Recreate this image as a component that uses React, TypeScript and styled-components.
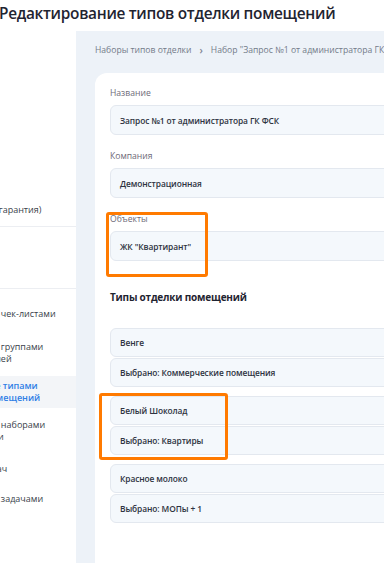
import React from "react";
import styled, { createGlobalStyle } from "styled-components";

const Global = createGlobalStyle`
  html, body { margin: 0; padding: 0; background: #ffffff; }
  body { font-family: "Open Sans", "Noto Sans", sans-serif; }
  * { box-sizing: border-box; }
`;

const Page = styled.div`
  width: 384px;
  height: 563px;
  overflow: hidden;
  display: flex;
  flex-direction: column;
  background: #ffffff;
`;

const Header = styled.header`
  height: 31px;
  flex: none;
  display: flex;
  align-items: center;
  padding-bottom: 4px;
  background: #ffffff;
`;

const Title = styled.h1`
  margin: 0 0 0 -1px;
  font-size: 15.4px;
  font-weight: 600;
  letter-spacing: -0.3px;
  line-height: 22px;
  color: #1f2431;
  white-space: nowrap;
`;

const Layout = styled.div`
  flex: 1;
  display: grid;
  grid-template-columns: 76px 1fr;
  min-height: 0;
`;

const Sidebar = styled.aside`
  overflow: hidden;
  background: #ffffff;
  display: flex;
  flex-direction: column;
`;

const Section = styled.div<{ $h?: number; $pt?: number; $end?: boolean; $divider?: boolean }>`
  width: 140px;
  margin-left: -55px;
  display: flex;
  flex-direction: column;
  gap: 7px;
  ${(p) => (p.$h ? `height: ${p.$h}px; flex: none;` : "")}
  padding-top: ${(p) => p.$pt ?? 0}px;
  justify-content: ${(p) => (p.$end ? "flex-end" : "flex-start")};
  border-bottom: ${(p) => (p.$divider ? "1px solid #eceef2" : "none")};
`;

const NavItem = styled.div<{ $active?: boolean; $h?: number }>`
  min-height: ${(p) => p.$h ?? 32}px;
  height: ${(p) => (p.$h ? `${p.$h}px` : "auto")};
  padding: 4px 0;
  display: flex;
  align-items: center;
  font-size: 9px;
  line-height: 12px;
  color: ${(p) => (p.$active ? "#2f7fe6" : "#3a3f4b")};
  font-weight: ${(p) => (p.$active ? 600 : 400)};
  background: ${(p) => (p.$active ? "#f3f5f8" : "transparent")};
  white-space: nowrap;
`;

const Main = styled.main`
  background: #edf2f8;
  overflow: hidden;
  padding: 13px 0 0 19px;
  display: flex;
  flex-direction: column;
`;

const Breadcrumbs = styled.nav`
  display: flex;
  align-items: center;
  gap: 8px;
  height: 12px;
  font-size: 8.6px;
  color: #737b88;
  white-space: nowrap;
  margin-bottom: 17px;
`;

const Chevron = styled.span`
  font-size: 10px;
  font-weight: 600;
  color: #7d8490;
`;

const Card = styled.section`
  width: 620px;
  flex: 1;
  background: #ffffff;
  border-radius: 12px 12px 0 0;
  padding: 14px 0 0 15px;
  display: flex;
  flex-direction: column;
`;

const Field = styled.div`
  position: relative;
  display: flex;
  flex-direction: column;
  gap: 6px;
  margin-bottom: 15px;
`;

const Label = styled.div`
  font-size: 8.6px;
  line-height: 12px;
  color: #6d6a77;
`;

const Input = styled.div`
  height: 30px;
  display: flex;
  align-items: center;
  padding-left: 9px;
  background: #f4f8fc;
  border: 1px solid #e3e8ef;
  border-radius: 6px;
  font-size: 8.4px;
  letter-spacing: -0.1px;
  font-weight: 600;
  color: #2e3341;
`;

const Heading = styled.h2`
  margin: 14px 0 23px;
  font-size: 10px;
  letter-spacing: -0.2px;
  line-height: 15px;
  font-weight: 700;
  color: #1f2431;
`;

const Groups = styled.div`
  display: flex;
  flex-direction: column;
  gap: 9px;
`;

const Group = styled.div`
  position: relative;
  display: flex;
  flex-direction: column;
  gap: 1px;
`;

const Row = styled.div`
  height: 29px;
  display: flex;
  align-items: center;
  padding-left: 9px;
  background: #f4f8fc;
  border: 1px solid #e3e8ef;
  border-radius: 6px;
  font-size: 8.4px;
  letter-spacing: -0.1px;
  font-weight: 600;
  color: #2e3341;
`;

const Highlight = styled.div<{ $l: number; $t: number; $w: number; $h: number }>`
  position: absolute;
  left: ${(p) => p.$l}px;
  top: ${(p) => p.$t}px;
  width: ${(p) => p.$w}px;
  height: ${(p) => p.$h}px;
  border: 3px solid #ff7a00;
  border-radius: 3px;
  pointer-events: none;
`;

const groups = [
  ["Венге", "Выбрано: Коммерческие помещения"],
  ["Белый Шоколад", "Выбрано: Квартиры"],
  ["Красное молоко", "Выбрано: МОПы + 1"],
];

export default function App() {
  return (
    <>
      <Global />
      <Page>
        <Header>
          <Title>Редактирование типов отделки помещений</Title>
        </Header>
        <Layout>
          <Sidebar>
            <Section $h={196} $end $divider>
              <NavItem>Замечания (гарантия)</NavItem>
            </Section>
            <Section $h={62} $divider />
            <Section $pt={9}>
              <NavItem>Управление чек-листами</NavItem>
              <NavItem>
                Управление группами
                <br />
                пользователей
              </NavItem>
              <NavItem $active>
                Управление типами
                <br />
                отделки помещений
              </NavItem>
              <NavItem>
                Управление наборами
                <br />
                вида отделки
              </NavItem>
              <NavItem $h={29}>Статусы задач</NavItem>
              <NavItem $h={18}>Управление задачами</NavItem>
            </Section>
          </Sidebar>
          <Main>
            <Breadcrumbs>
              <span>Наборы типов отделки</span>
              <Chevron>›</Chevron>
              <span>Набор "Запрос №1 от администратора ГК ФСК"</span>
            </Breadcrumbs>
            <Card>
              <Field>
                <Label>Название</Label>
                <Input>Запрос №1 от администратора ГК ФСК</Input>
              </Field>
              <Field>
                <Label>Компания</Label>
                <Input>Демонстрационная</Input>
              </Field>
              <Field>
                <Label>Объекты</Label>
                <Input>ЖК "Квартирант"</Input>
                <Highlight $l={-4} $t={-1} $w={102} $h={65} />
              </Field>
              <Heading>Типы отделки помещений</Heading>
              <Groups>
                {groups.map(([a, b], i) => (
                  <Group key={a}>
                    <Row>{a}</Row>
                    <Row>{b}</Row>
                    {i === 1 && <Highlight $l={-11} $t={-3} $w={129} $h={67} />}
                  </Group>
                ))}
              </Groups>
            </Card>
          </Main>
        </Layout>
      </Page>
    </>
  );
}
